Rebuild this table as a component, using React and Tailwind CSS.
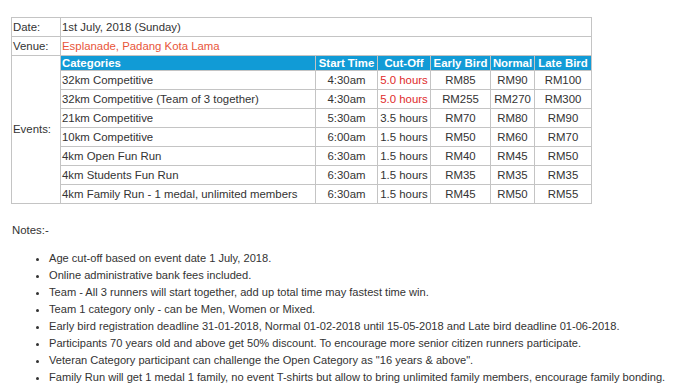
import React from 'react';

const events = [
  { name: '32km Competitive', start: '4:30am', cut: '5.0 hours', red: true, early: 'RM85', normal: 'RM90', late: 'RM100' },
  { name: '32km Competitive (Team of 3 together)', start: '4:30am', cut: '5.0 hours', red: true, early: 'RM255', normal: 'RM270', late: 'RM300' },
  { name: '21km Competitive', start: '5:30am', cut: '3.5 hours', early: 'RM70', normal: 'RM80', late: 'RM90' },
  { name: '10km Competitive', start: '6:00am', cut: '1.5 hours', early: 'RM50', normal: 'RM60', late: 'RM70' },
  { name: '4km Open Fun Run', start: '6:30am', cut: '1.5 hours', early: 'RM40', normal: 'RM45', late: 'RM50' },
  { name: '4km Students Fun Run', start: '6:30am', cut: '1.5 hours', early: 'RM35', normal: 'RM35', late: 'RM35' },
  { name: '4km Family Run - 1 medal, unlimited members', start: '6:30am', cut: '1.5 hours', early: 'RM45', normal: 'RM50', late: 'RM55' },
];

const notes = [
  'Age cut-off based on event date 1 July, 2018.',
  'Online administrative bank fees included.',
  'Team - All 3 runners will start together, add up total time may fastest time win.',
  'Team 1 category only - can be Men, Women or Mixed.',
  'Early bird registration deadline 31-01-2018, Normal 01-02-2018 until 15-05-2018 and Late bird deadline 01-06-2018.',
  'Participants 70 years old and above get 50% discount. To encourage more senior citizen runners participate.',
  'Veteran Category participant can challenge the Open Category as "16 years & above".',
  'Family Run will get 1 medal 1 family, no event T-shirts but allow to bring unlimited family members, encourage family bonding.',
];

const cell = 'border border-[#c4c4c4] px-[1px] py-0 h-[19px] leading-[17px] whitespace-nowrap overflow-hidden';
const head = 'border border-[#c4c4c4] bg-[#119bd6] text-white font-bold px-[1px] py-0 h-[15px] leading-[14px] whitespace-nowrap overflow-hidden';

export default function App() {
  return (
    <div className="w-[696px] h-[385px] bg-white text-[#333] text-[11.4px] font-['Liberation_Sans',Arial,sans-serif] pt-[17px] pl-[11px] overflow-hidden">
      <table className="border-collapse table-fixed w-[580px]">
        <colgroup>
          <col className="w-[49px]" />
          <col className="w-[255px]" />
          <col className="w-[62px]" />
          <col className="w-[53px]" />
          <col className="w-[60px]" />
          <col className="w-[44px]" />
          <col className="w-[57px]" />
        </colgroup>
        <tbody>
          <tr>
            <td className={cell}>Date:</td>
            <td className={cell} colSpan={6}>1st July, 2018 (Sunday)</td>
          </tr>
          <tr>
            <td className={cell}>Venue:</td>
            <td className={`${cell} text-[#e8553a]`} colSpan={6}>Esplanade, Padang Kota Lama</td>
          </tr>
          <tr>
            <td className={`${cell} align-middle`} rowSpan={8}>Events:</td>
            <td className={head}>Categories</td>
            <td className={`${head} text-center`}>Start Time</td>
            <td className={`${head} text-center`}>Cut-Off</td>
            <td className={`${head} text-center`}>Early Bird</td>
            <td className={`${head} text-center`}>Normal</td>
            <td className={`${head} text-center`}>Late Bird</td>
          </tr>
          {events.map((e) => (
            <tr key={e.name}>
              <td className={cell}>{e.name}</td>
              <td className={`${cell} text-center`}>{e.start}</td>
              <td className={`${cell} text-center ${e.red ? 'text-[#e02b2b]' : ''}`}>{e.cut}</td>
              <td className={`${cell} text-center`}>{e.early}</td>
              <td className={`${cell} text-center`}>{e.normal}</td>
              <td className={`${cell} text-center`}>{e.late}</td>
            </tr>
          ))}
        </tbody>
      </table>

      <p className="mt-[18px] ml-[1px] leading-[17px]">Notes:-</p>
      <ul className="mt-[11px] ml-[27px] list-disc pl-[11px] text-[11.1px] leading-[17px] whitespace-nowrap">
        {notes.map((n) => (
          <li key={n}>{n}</li>
        ))}
      </ul>
    </div>
  );
}
